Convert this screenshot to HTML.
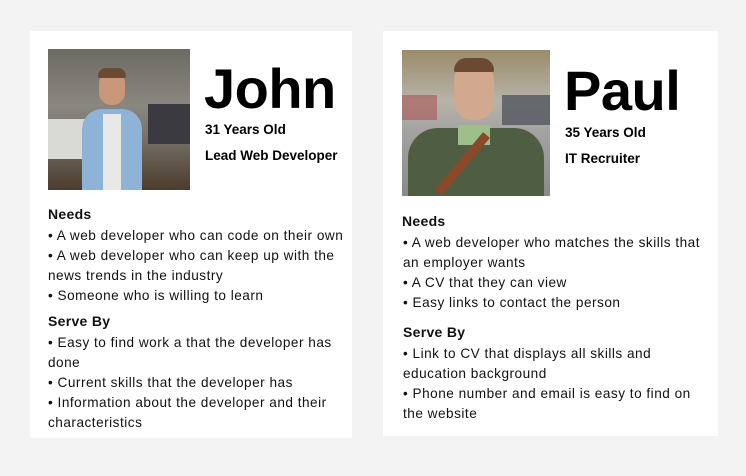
<!DOCTYPE html>
<html><head><meta charset="utf-8"><style>
*{margin:0;padding:0;box-sizing:border-box}
body{width:746px;height:476px;background:#f3f3f3;font-family:"Liberation Sans",sans-serif;color:#111;position:relative;overflow:hidden}
.card{position:absolute;background:#fff}
.l{position:absolute;white-space:nowrap;font-size:13.6px;line-height:16px;letter-spacing:.5px}
.h{font-weight:bold;font-size:14px;letter-spacing:.3px}
.name{position:absolute;font-weight:bold;font-size:56px;line-height:58px;letter-spacing:-0.5px;color:#000}
.sub{position:absolute;font-weight:bold;font-size:13.5px;white-space:nowrap;color:#000}
.ph{position:absolute;overflow:hidden}
</style></head><body>
<div class="card" style="left:30px;top:31px;width:322px;height:407px"></div>
<div class="card" style="left:383px;top:31px;width:335px;height:405px"></div>

<div class="ph" style="left:48px;top:49px;width:142px;height:141px;background:linear-gradient(180deg,#6d6a63 0%,#8a8780 40%,#7a756c 60%,#4a3c2e 100%)">
 <div style="position:absolute;left:0;top:70px;width:45px;height:40px;background:#d9d9d6"></div>
 <div style="position:absolute;left:100px;top:55px;width:42px;height:40px;background:#3a3a40"></div>
 <div style="position:absolute;left:34px;top:60px;width:60px;height:81px;background:#8fb3d6;border-radius:20px 20px 0 0"></div>
 <div style="position:absolute;left:55px;top:65px;width:18px;height:76px;background:#e8e8e6"></div>
 <div style="position:absolute;left:51px;top:22px;width:26px;height:34px;background:#c99779;border-radius:12px"></div>
 <div style="position:absolute;left:50px;top:19px;width:28px;height:10px;background:#6a4a30;border-radius:8px 8px 2px 2px"></div>
</div>
<div class="ph" style="left:402px;top:50px;width:148px;height:146px;background:linear-gradient(180deg,#9a8c6a 0%,#b7b3a8 35%,#a0a0a0 60%,#8a8a88 100%)">
 <div style="position:absolute;left:0;top:45px;width:35px;height:25px;background:#a55;opacity:.6"></div>
 <div style="position:absolute;left:100px;top:45px;width:48px;height:30px;background:#444a55;opacity:.7"></div>
 <div style="position:absolute;left:6px;top:78px;width:136px;height:68px;background:#4f5e43;border-radius:30px 30px 0 0"></div>
 <div style="position:absolute;left:56px;top:75px;width:32px;height:20px;background:#9dc08a"></div>
 <div style="position:absolute;left:52px;top:12px;width:40px;height:58px;background:#d2a88e;border-radius:18px"></div>
 <div style="position:absolute;left:52px;top:8px;width:40px;height:14px;background:#6b4a33;border-radius:14px 14px 2px 2px"></div>
 <div style="position:absolute;left:80px;top:85px;width:9px;height:75px;background:#8a4a2a;transform:rotate(40deg);transform-origin:top"></div>
</div>

<div class="name" style="left:204px;top:60px">John</div>
<div class="sub" style="left:205px;top:122px">31 Years Old</div>
<div class="sub" style="left:205px;top:148px">Lead Web Developer</div>
<div class="name" style="left:564px;top:62px">Paul</div>
<div class="sub" style="left:565px;top:125px">35 Years Old</div>
<div class="sub" style="left:565px;top:151px">IT Recruiter</div>

<div class="l h" style="left:48px;top:206px">Needs</div>
<div class="l" style="left:48px;top:228px">• A web developer who can code on their own</div>
<div class="l" style="left:48px;top:248px">• A web developer who can keep up with the</div>
<div class="l" style="left:48px;top:268px">news trends in the industry</div>
<div class="l" style="left:48px;top:288px">• Someone who is willing to learn</div>
<div class="l h" style="left:48px;top:313px">Serve By</div>
<div class="l" style="left:48px;top:335px">• Easy to find work a that the developer has</div>
<div class="l" style="left:48px;top:355px">done</div>
<div class="l" style="left:48px;top:375px">• Current skills that the developer has</div>
<div class="l" style="left:48px;top:395px">• Information about the developer and their</div>
<div class="l" style="left:48px;top:415px">characteristics</div>

<div class="l h" style="left:402px;top:213px">Needs</div>
<div class="l" style="left:403px;top:235px">• A web developer who matches the skills that</div>
<div class="l" style="left:403px;top:255px">an employer wants</div>
<div class="l" style="left:403px;top:275px">• A CV that they can view</div>
<div class="l" style="left:403px;top:295px">• Easy links to contact the person</div>
<div class="l h" style="left:403px;top:324px">Serve By</div>
<div class="l" style="left:403px;top:346px">• Link to CV that displays all skills and</div>
<div class="l" style="left:403px;top:366px">education background</div>
<div class="l" style="left:403px;top:386px">• Phone number and email is easy to find on</div>
<div class="l" style="left:403px;top:406px">the website</div>
</body></html>
